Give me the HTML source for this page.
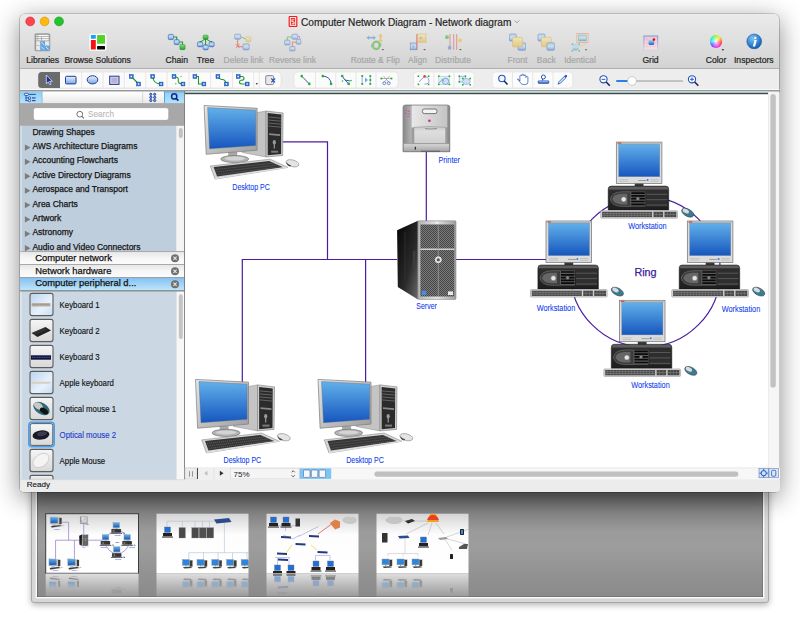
<!DOCTYPE html>
<html><head><meta charset="utf-8">
<style>
*{margin:0;padding:0;box-sizing:border-box}
html,body{width:800px;height:618px;overflow:hidden;background:#fff;font-family:"Liberation Sans",sans-serif}
.abs{position:absolute}
#win{position:absolute;left:20px;top:13.5px;width:759.4px;height:478px;border-radius:5px 5px 4px 4px;background:#ececec;box-shadow:0 6px 26px rgba(0,0,0,.48),0 0 0 .6px rgba(0,0,0,.3)}
#tb{position:absolute;left:0;top:0;width:100%;height:55.3px;border-radius:5px 5px 0 0;background:linear-gradient(#ebebeb,#d3d3d3);border-bottom:1px solid #b0b0b0}
#tb2{position:absolute;left:0;top:55.3px;width:100%;height:22.5px;background:#ededed}
#status{position:absolute;left:0;top:466.7px;width:760px;height:11.8px;background:#ececec;border-radius:0 0 4px 4px}
#panel{position:absolute;left:31px;top:488px;width:738px;height:115px;background:#d6d6d6;border:1px solid #a8a8a8;border-radius:0 0 3px 3px;box-shadow:0 2px 6px rgba(0,0,0,.3)}
#panelin{position:absolute;left:5px;top:3px;width:726px;height:105px;box-shadow:inset 1px 0 0 rgba(0,0,0,.22),inset -1px 0 0 rgba(0,0,0,.15),inset 0 -1px 0 rgba(0,0,0,.15),0 0 0 1.4px #fbfbfb;background:linear-gradient(#666 0%,#838383 16%,#9b9b9b 38%,#9d9d9d 52%,#929292 78%,#8a8a8a 100%)}
</style></head><body>
<div id="panel"><div id="panelin"></div></div>
<div id="win">
  <div id="tb"></div>
  <div id="tb2"></div>
  <div id="status"></div>
</div>
<svg class="abs" style="left:0;top:0" width="800" height="95" viewBox="0 0 800 95" font-family="Liberation Sans">
<defs>
<linearGradient id="gblue" x1="0" y1="0" x2="0" y2="1"><stop offset="0" stop-color="#9cc8f2"/><stop offset=".5" stop-color="#b8e0fa"/><stop offset="1" stop-color="#4f86d4"/></linearGradient>
<linearGradient id="ggreen" x1="0" y1="0" x2="0" y2="1"><stop offset="0" stop-color="#8fe08a"/><stop offset="1" stop-color="#1fa02a"/></linearGradient>
<linearGradient id="gyel" x1="0" y1="0" x2="0" y2="1"><stop offset="0" stop-color="#fbe7a0"/><stop offset="1" stop-color="#e8b94a"/></linearGradient>
<linearGradient id="gbtn" x1="0" y1="0" x2="0" y2="1"><stop offset="0" stop-color="#dbe9f8"/><stop offset="1" stop-color="#8fb4e6"/></linearGradient>
<radialGradient id="gi" cx=".4" cy=".3" r=".7"><stop offset="0" stop-color="#7cc4f5"/><stop offset="1" stop-color="#0d5fb8"/></radialGradient>
</defs>
<!-- traffic lights -->
<circle cx="30.2" cy="21.4" r="4.4" fill="#fc4650" stroke="#d92a36" stroke-width=".7"/>
<circle cx="44.6" cy="21.4" r="4.4" fill="#fdb812" stroke="#dc9a08" stroke-width=".7"/>
<circle cx="59" cy="21.4" r="4.4" fill="#22c52c" stroke="#139c1d" stroke-width=".7"/>
<!-- title -->
<rect x="288.6" y="15.9" width="8.8" height="11.1" rx="1" fill="#ee1c1c"/>
<rect x="290.3" y="17.6" width="5.4" height="7.7" fill="none" stroke="#fff" stroke-width="1"/>
<path d="M294.3 19.8h-2.4v2h2.2v2h-2.4" fill="none" stroke="#fff" stroke-width=".9"/>
<text x="301" y="25.7" font-size="10.1" fill="#262626" stroke="#262626" stroke-width=".2">Computer Network Diagram - Network diagram</text>
<path d="M514.5 20.5l2.5 2.3 2.5-2.3" fill="none" stroke="#9a9a9a" stroke-width=".9"/>
<!-- Libraries icon -->
<rect x="35" y="33.8" width="14.8" height="17" rx=".8" fill="#a4a4a4" stroke="#808080" stroke-width=".6"/>
<g fill="#fafafa"><rect x="36.3" y="34.9" width="12.4" height="1.3"/><rect x="36.3" y="37" width="12.4" height="1.3"/><rect x="36.3" y="39.1" width="12.4" height="1.3"/></g>
<g fill="#9a9a9a"><rect x="37.6" y="34.9" width=".6" height="5.5"/><rect x="41" y="37" width=".8" height="3.4"/></g>
<g fill="#e2e2e2"><rect x="36.1" y="41.2" width="4.2" height="4.4"/><rect x="36.1" y="45.9" width="4.2" height="4.3"/><rect x="45" y="41.2" width="4.3" height="4.4"/></g>
<g fill="#5aa8ee"><rect x="40.5" y="41.2" width="4.3" height="4.4"/><rect x="40.5" y="45.9" width="4.3" height="4.3"/><rect x="45" y="45.9" width="4.3" height="4.3"/></g>
<path d="M37 42l2.6 2.8M37 46.7l2.6 2.8M45.9 42l2.6 2.8M41.4 42l2.6 2.8M41.4 46.7l2.6 2.8M45.9 46.7l2.6 2.8" stroke="#fff" stroke-width=".9" opacity=".85"/>
<!-- Browse Solutions -->
<rect x="89.3" y="33.7" width="17.3" height="17.1" rx="2.5" fill="#fff"/>
<rect x="90.9" y="35" width="4.9" height="3.7" rx=".5" fill="#1aa0f5"/>
<rect x="90.9" y="40.1" width="4.9" height="9.3" rx=".5" fill="#fa1010"/>
<rect x="97.1" y="35" width="7.9" height="8.8" rx=".5" fill="#52d22a"/>
<rect x="97.1" y="45.9" width="7.9" height="3.5" rx=".5" fill="#050505"/>
<!-- Chain -->
<path d="M173.5 37h3.2v4.5M179 42h3.5v4.5" fill="none" stroke="#1f9a26" stroke-width="1.1"/>
<rect x="168.3" y="34.4" width="5.2" height="5.2" rx="1.2" fill="url(#gblue)" stroke="#3a5aa8" stroke-width=".6"/>
<rect x="174.2" y="39.6" width="5" height="5" rx="1.2" fill="url(#gblue)" stroke="#3a5aa8" stroke-width=".6"/>
<rect x="179.9" y="44.5" width="5.2" height="5.2" rx="1.2" fill="url(#ggreen)" stroke="#218b27" stroke-width=".5"/>
<!-- Tree -->
<path d="M205.6 38.6L200.1 42.3M205.6 38.6L211.6 42.3M205.6 38.6V45.3" fill="none" stroke="#1f9a26" stroke-width="1"/><g fill="#1f9a26"><circle cx="200.4" cy="41.9" r=".9"/><circle cx="211.3" cy="41.9" r=".9"/><circle cx="205.6" cy="44.8" r=".9"/></g>
<rect x="203.1" y="35.1" width="5" height="4.2" rx="1.2" fill="url(#ggreen)" stroke="#218b27" stroke-width=".5"/>
<rect x="197.5" y="41.9" width="5.2" height="4.9" rx="1.2" fill="url(#gblue)" stroke="#3a5aa8" stroke-width=".6"/>
<rect x="203.1" y="44.9" width="5.1" height="4.9" rx="1.2" fill="url(#gblue)" stroke="#3a5aa8" stroke-width=".6"/>
<rect x="209.1" y="41.9" width="5" height="4.9" rx="1.2" fill="url(#gblue)" stroke="#3a5aa8" stroke-width=".6"/>
<!-- Delete link (disabled) -->
<g opacity=".55">
<path d="M240.7 36.7l5 2.4" stroke="#2aa02a" stroke-width=".9"/>
<path d="M237.7 39.2v7.5h5.3" fill="none" stroke="#e5341e" stroke-width="1"/>
<path d="M235.8 44.3l3.8 3.6M239.6 44.3l-3.8 3.6" stroke="#e5341e" stroke-width="1"/>
<rect x="234.6" y="34.2" width="6.1" height="5" rx="1" fill="url(#gblue)" stroke="#3a5aa8" stroke-width=".6"/>
<rect x="245.8" y="36.8" width="5.1" height="4.9" rx="1" fill="url(#gyel)" stroke="#c69a2a" stroke-width=".5"/>
<rect x="243" y="43.8" width="6.2" height="6.1" rx="1" fill="url(#gblue)" stroke="#3a5aa8" stroke-width=".6"/>
</g>
<!-- Reverse link (disabled) -->
<g opacity=".55">
<path d="M287.3 40v-3h4.7" stroke="#2aa02a" stroke-width=".9" fill="none"/>
<path d="M297.7 36.5h2v2.8" stroke="#d03ac8" stroke-width=".9" fill="none"/>
<path d="M296.4 42.2h-4v4.3" stroke="#e5341e" stroke-width=".9" fill="none"/>
<rect x="284.6" y="40.1" width="5.4" height="4.9" rx="1" fill="url(#gblue)" stroke="#3a5aa8" stroke-width=".6"/>
<rect x="292" y="34.2" width="5.7" height="5" rx="1" fill="url(#gblue)" stroke="#3a5aa8" stroke-width=".6"/>
<rect x="296.4" y="39.3" width="4.4" height="5" rx="1" fill="url(#gblue)" stroke="#3a5aa8" stroke-width=".6"/>
<rect x="289.7" y="46.5" width="5.3" height="4.5" rx="1" fill="url(#gblue)" stroke="#3a5aa8" stroke-width=".6"/>
</g>
<!-- Rotate & Flip (disabled) -->
<g opacity=".6">
<path d="M366.5 37.7l2.6-2.2v4.4zM376 37.7l-2.6-2.2v4.4z" fill="#5b8fd8"/><path d="M368.5 37.7h5.5" stroke="#5b8fd8" stroke-width="1.6"/>
<path d="M380.6 33.8l-2.2 2.6h4.4zM380.6 42.5l-2.2-2.6h4.4z" fill="#e8b42a"/><path d="M380.6 35.5v5.3" stroke="#e8b42a" stroke-width="1.6"/>
<path d="M372.3 44.5q.5-3.6 4-3.8 3.4.2 3.9 3.4l1-.6-.4 3-2.6-1.2 1-.5q-.6-2.2-2.9-2.3-2.4.1-2.8 2.3z M380.2 46.2q-.5 3.6-4 3.8-3.4-.2-3.9-3.4l-1 .6.4-3 2.6 1.2-1 .5q.6 2.2 2.9 2.3 2.4-.1 2.8-2.3z" fill="#4cbc3c" stroke="#3a9a30" stroke-width=".4"/>
<path d="M381.6 49h2.6l-1.3 1.6z" fill="#111"/>
</g>
<!-- Align (disabled) -->
<g opacity=".6">
<rect x="417.7" y="34" width="8.3" height="8.2" fill="url(#gyel)" stroke="#c69a2a" stroke-width=".5"/>
<rect x="410.2" y="43" width="6.8" height="6.8" fill="url(#gblue)" stroke="#3a5aa8" stroke-width=".6"/>
<path d="M416.8 34v15.8" stroke="#e0443a" stroke-width="1"/>
<path d="M419 38l2.5-1.3v2.6z M415 46.5l-2.5-1.3v2.6z" fill="#5b8fd8"/>
<path d="M423.2 49h2.6l-1.3 1.6z" fill="#111"/>
</g>
<!-- Distribute (disabled) -->
<g opacity=".6">
<path d="M450 34v15.8M453.7 34v15.8M456.7 34v15.8" stroke="#e0443a" stroke-width=".8"/>
<circle cx="447" cy="37.2" r="1.9" fill="#3cb83c"/>
<circle cx="460.1" cy="40.5" r="1.9" fill="#f0c030"/>
<circle cx="449.6" cy="47.7" r="1.9" fill="#5b8fd8"/>
<path d="M459.1 49h2.6l-1.3 1.6z" fill="#111"/>
</g>
<!-- Front (disabled) -->
<g opacity=".6">
<rect x="509.4" y="34" width="6.9" height="7.1" rx="1.2" fill="url(#gblue)" stroke="#3a5aa8" stroke-width=".6"/>
<rect x="518" y="42.8" width="7.6" height="7.5" rx="1.2" fill="url(#gblue)" stroke="#3a5aa8" stroke-width=".6"/>
<rect x="512.5" y="37.4" width="10" height="9.4" rx="1" fill="url(#gyel)" stroke="#c69a2a" stroke-width=".5"/>
</g>
<!-- Back (disabled) -->
<g opacity=".6">
<rect x="538" y="34" width="7" height="7.1" rx="1.2" fill="url(#gblue)" stroke="#3a5aa8" stroke-width=".6"/>
<rect x="541.3" y="37.4" width="10" height="9.4" rx="1" fill="url(#gyel)" stroke="#c69a2a" stroke-width=".5"/>
<rect x="547" y="42.8" width="7.4" height="7.5" rx="1.2" fill="url(#gblue)" stroke="#3a5aa8" stroke-width=".6"/>
</g>
<!-- Identical (disabled) -->
<g opacity=".6">
<path d="M577 42.4l-2 3M588 42.4l-9 4.5" stroke="#f3c9a0" stroke-width="1.5"/>
<rect x="576.9" y="33.6" width="11.2" height="8.8" fill="#fbe3e3" stroke="#e07b7b" stroke-width=".7"/>
<rect x="578.6" y="35" width="7.8" height="6" fill="url(#gblue)" stroke="#3cb83c" stroke-width=".6"/>
<circle cx="575.6" cy="47.3" r="3.3" fill="url(#gblue)"/>
<g fill="#2ec02e"><rect x="571.6" y="43.4" width="1.6" height="1.6"/><rect x="578.4" y="43.4" width="1.6" height="1.6"/><rect x="571.6" y="50" width="1.6" height="1.6"/><rect x="578.4" y="50" width="1.6" height="1.6"/></g>
<path d="M584.8 49.2h2.6l-1.3 1.6z" fill="#111"/>
</g>
<!-- Grid -->
<defs><linearGradient id="gridfade" x1="0" y1="0" x2="0" y2="1"><stop offset="0" stop-color="#f6c4d0"/><stop offset="1" stop-color="#f3e4ea"/></linearGradient>
<linearGradient id="gridb" x1="0" y1="0" x2="0" y2="1"><stop offset="0" stop-color="#6f90e0"/><stop offset="1" stop-color="#6f90e0" stop-opacity=".15"/></linearGradient>
<linearGradient id="gridsq" x1="0" y1="0" x2="0" y2="1"><stop offset="0" stop-color="#c8f0ff"/><stop offset="1" stop-color="#1a64c8"/></linearGradient></defs>
<rect x="643.9" y="36" width="13.8" height="14" fill="url(#gridfade)" stroke="url(#gridb)" stroke-width=".9"/>
<path d="M647 36.5v13.2M650.5 36.5v13.2M654 36.5v13.2M644.3 39.5h13M644.3 43h13M644.3 46.5h13" stroke="#f0a8b8" stroke-width=".35" opacity=".7"/>
<rect x="648.6" y="38.8" width="5.6" height="6.2" rx="1.2" fill="url(#gridsq)"/>
<circle cx="653.9" cy="39.6" r="1.3" fill="#e00c0c"/>
<!-- Color wheel: html overlay -->
<path d="M721.6 49.2h2.6l-1.3 1.6z" fill="#111"/>
<!-- Inspectors -->
<circle cx="754.2" cy="41.4" r="7.4" fill="url(#gi)" stroke="#0b4f9c" stroke-width=".5"/>
<circle cx="755.3" cy="37.9" r="1.15" fill="#fff"/><path d="M754.6 40h2.2l-1.7 6.6h-2.3z" fill="#fff"/><path d="M753.6 40.3h2.4" stroke="#fff" stroke-width=".6"/>
<!-- labels -->
<g font-size="8.6" fill="#262626" stroke="#262626" stroke-width=".22" text-anchor="middle">
<text x="42.7" y="63">Libraries</text>
<text x="97.6" y="63">Browse Solutions</text>
<text x="176.8" y="63">Chain</text>
<text x="205.5" y="63">Tree</text>
<text x="650.5" y="63">Grid</text>
<text x="716" y="63">Color</text>
<text x="753.8" y="63">Inspectors</text>
</g>
<g font-size="8.5" fill="#a6a6a6" stroke="#a6a6a6" stroke-width=".18" text-anchor="middle">
<text x="243.4" y="63">Delete link</text>
<text x="292.5" y="63">Reverse link</text>
<text x="375.3" y="63">Rotate &amp; Flip</text>
<text x="417.5" y="63">Align</text>
<text x="453" y="63">Distribute</text>
<text x="517.5" y="63">Front</text>
<text x="546.3" y="63">Back</text>
<text x="580" y="63">Identical</text>
</g>
</svg>
<div class="abs" style="left:709.8px;top:35.3px;width:12.6px;height:12.6px;border-radius:50%;background:radial-gradient(circle,rgba(255,255,255,.95) 0,rgba(255,255,255,.5) 30%,rgba(255,255,255,0) 70%),conic-gradient(#9cf53a,#f8e030 40deg,#ff6a20 80deg,#ff2050 110deg,#ff30c0 150deg,#c040ff 190deg,#5050ff 230deg,#20d0ff 270deg,#20f0a0 310deg,#9cf53a)"></div>
<svg class="abs" style="left:0;top:0" width="800" height="95" viewBox="0 0 800 95">
<defs>
<linearGradient id="gsq" x1="0" y1="0" x2="0" y2="1"><stop offset="0" stop-color="#e6f0fb"/><stop offset="1" stop-color="#7ea7e0"/></linearGradient>
</defs>
<g fill="#fbfbfb" stroke="#dedede" stroke-width=".6">
<rect x="38.2" y="72" width="242.8" height="16" rx="3.5"/>
<rect x="294" y="72" width="104" height="16" rx="3.5"/>
<rect x="413.5" y="72" width="60.8" height="16" rx="3.5"/>
<rect x="492.3" y="72" width="80.5" height="16" rx="3.5"/>
</g>
<path d="M38.2 75.5a3.5 3.5 0 0 1 3.5-3.5H60v16H41.7a3.5 3.5 0 0 1-3.5-3.5z" fill="#6b6b6b"/>
<g stroke="#e2e2e2" stroke-width=".8">
<path d="M81.7 72v16M103 72v16M124.3 72v16M145.8 72v16M167 72v16M189 72v16M210.6 72v16M232.5 72v16M253.7 72v16M259.3 72v16"/>
<path d="M315.5 72v16M335.8 72v16M356 72v16M376 72v16"/>
<path d="M433.8 72v16M454 72v16"/>
<path d="M512.5 72v16M532.8 72v16M553 72v16"/>
</g>
<!-- pointer -->
<path d="M46.3 75l0 8.8 2-1.9 1.5 2.9 1.3-.7-1.5-2.8h2.8z" fill="#1a2fa0" stroke="#f0f4ff" stroke-width=".7"/>
<!-- rect -->
<rect x="65.5" y="76.3" width="10.5" height="7.6" rx="1" fill="url(#gsq)" stroke="#1c3c9c" stroke-width="1"/>
<!-- ellipse -->
<ellipse cx="92.5" cy="79.8" rx="5.3" ry="4.1" fill="url(#gsq)" stroke="#1c3c9c" stroke-width="1"/>
<!-- square -->
<rect x="109.7" y="76.2" width="9.3" height="8.2" fill="#d8d0e8" stroke="#1c3c9c" stroke-width="1"/>
<rect x="111.5" y="77.8" width="5.7" height="5" fill="#b9aed3"/>
<!-- connectors -->
<g fill="none" stroke="#1e9a26" stroke-width="1.1">
<path d="M131.3 76.5L138.6 84"/>
<path d="M152.7 76.5Q153.5 84 161 84"/>
<path d="M174 76.5Q179 77 178.3 80.2Q177.5 84 183 84"/>
<path d="M194.9 76.5H198.5V84H203.9"/>
<path d="M217.9 76.5Q220 80 222 79.5Q225 79 226.4 84"/>
<path d="M238.2 76.5H242Q244 76.5 244 78.5Q244 80.3 241 80.3Q239.5 80.3 239.5 82.3Q239.5 84 242 84H247"/>
</g>
<g fill="#2a7bd8" stroke="#1a3fa0" stroke-width=".5">
<rect x="129.4" y="74.6" width="3.8" height="3.8"/><rect x="136.7" y="82.1" width="3.8" height="3.8"/>
<rect x="150.8" y="74.6" width="3.8" height="3.8"/><rect x="159.2" y="82.1" width="3.8" height="3.8"/>
<rect x="172.1" y="74.6" width="3.8" height="3.8"/><rect x="181.1" y="82.1" width="3.8" height="3.8"/>
<rect x="193" y="74.6" width="3.8" height="3.8"/><rect x="202" y="82.1" width="3.8" height="3.8"/>
<rect x="216" y="74.6" width="3.8" height="3.8"/><rect x="224.5" y="82.1" width="3.8" height="3.8"/>
<rect x="236.3" y="74.6" width="3.8" height="3.8"/><rect x="245.3" y="82.1" width="3.8" height="3.8"/>
</g>
<g fill="#fff"><rect x="130.6" y="75.8" width="1.4" height="1.4"/><rect x="137.9" y="83.3" width="1.4" height="1.4"/><rect x="152" y="75.8" width="1.4" height="1.4"/><rect x="160.4" y="83.3" width="1.4" height="1.4"/><rect x="173.3" y="75.8" width="1.4" height="1.4"/><rect x="182.3" y="83.3" width="1.4" height="1.4"/><rect x="194.2" y="75.8" width="1.4" height="1.4"/><rect x="203.2" y="83.3" width="1.4" height="1.4"/><rect x="217.2" y="75.8" width="1.4" height="1.4"/><rect x="225.7" y="83.3" width="1.4" height="1.4"/><rect x="237.5" y="75.8" width="1.4" height="1.4"/><rect x="246.5" y="83.3" width="1.4" height="1.4"/></g>
<circle cx="181" cy="76.6" r=".7" fill="#2ec02e"/><circle cx="175.8" cy="83.8" r=".7" fill="#2ec02e"/>
<path d="M255.6 83.2h2.4l-1.2 1.6z" fill="#111"/>
<!-- box x -->
<rect x="265.7" y="75.6" width="7.9" height="9" rx="1.2" fill="#e8e8e8" stroke="#707070" stroke-width=".8"/>
<path d="M271.3 78.5l3.8 3.8M275.1 78.5l-3.8 3.8" stroke="#1a55c8" stroke-width="1.1"/>
<!-- group 2 -->
<path d="M301.7 76.1L309.3 83.9" stroke="#3457b0" stroke-width="1"/>
<path d="M322.8 76.1Q330.5 76.5 331.1 83.9" fill="none" stroke="#3457b0" stroke-width="1"/>
<path d="M342.2 76L345 80L348.7 83.9M345 80L350 81" fill="none" stroke="#3457b0" stroke-width="1"/>
<g fill="#22b030"><circle cx="301.7" cy="76.1" r="1.3"/><circle cx="309.3" cy="83.9" r="1.3"/><circle cx="322.8" cy="76.1" r="1.3"/><circle cx="331.1" cy="83.9" r="1.3"/><circle cx="342.2" cy="76" r="1.3"/><circle cx="348.7" cy="83.9" r="1.3"/><circle cx="351" cy="80.6" r=".8"/><circle cx="342.5" cy="81" r=".8"/></g>
<path d="M362.2 76v8M370.3 76v8" stroke="#5b8fd8" stroke-width=".7"/>
<g fill="#22b030"><circle cx="362.2" cy="76" r="1.1"/><circle cx="362.2" cy="84" r="1.1"/><circle cx="370.3" cy="76" r="1.1"/><circle cx="370.3" cy="80" r="1.1"/><circle cx="370.3" cy="84" r="1.1"/></g>
<path d="M365 77.6v4.8l3-2.4z" fill="#7aa7e0"/>
<path d="M381 78.5h11M383.5 76l6 7M389.5 76l-6 7" stroke="#8a8a8a" stroke-width=".6"/>
<g fill="#22b030"><circle cx="381.4" cy="78.5" r="1.1"/><circle cx="391.4" cy="78.5" r="1.1"/></g>
<circle cx="384.3" cy="83.2" r="1.5" fill="none" stroke="#4a78c8" stroke-width=".8"/><circle cx="388.7" cy="83.2" r="1.5" fill="none" stroke="#4a78c8" stroke-width=".8"/>
<!-- group 3 -->
<path d="M419 81.8L424.6 76.4" stroke="#5b8fd8" stroke-width=".8"/>
<path d="M424.6 76.4Q430 77.5 428.8 82.5Q427.5 84.5 424.5 84" fill="none" stroke="#7a9ad8" stroke-width=".9"/>
<circle cx="424.6" cy="76.4" r="1.3" fill="#e04040"/>
<g fill="#22b030"><rect x="417.6" y="75.4" width="1.6" height="1.6"/><rect x="427.8" y="75.4" width="1.6" height="1.6"/><rect x="417.6" y="83.6" width="1.6" height="1.6"/><rect x="427.8" y="83.6" width="1.6" height="1.6"/></g>
<rect x="438.8" y="76.2" width="10.7" height="8.2" fill="#e3eef8" stroke="#9ad09a" stroke-width=".5"/>
<circle cx="445.5" cy="81.3" r="3.2" fill="#cfe0f5" stroke="#5b8fd8" stroke-width=".7"/>
<path d="M439 83l3.5-4 1.5 2.5" fill="none" stroke="#5b8fd8" stroke-width=".7"/>
<g fill="#22b030"><rect x="438" y="75.4" width="1.6" height="1.6"/><rect x="448.6" y="75.4" width="1.6" height="1.6"/><rect x="438" y="83.6" width="1.6" height="1.6"/><rect x="448.6" y="83.6" width="1.6" height="1.6"/></g>
<rect x="459.2" y="76.2" width="6.4" height="5.8" fill="#e3eef8" stroke="#7a9ad8" stroke-width=".6"/>
<ellipse cx="466.4" cy="81.4" rx="3.8" ry="3" fill="#cfe0f5" stroke="#7a9ad8" stroke-width=".6"/>
<g fill="#22b030"><rect x="458.5" y="75.4" width="1.6" height="1.6"/><rect x="464.6" y="75.4" width="1.6" height="1.6"/><rect x="462" y="77.7" width="1.6" height="1.6"/><rect x="469.4" y="77.7" width="1.6" height="1.6"/><rect x="458.5" y="81" width="1.6" height="1.6"/><rect x="462" y="84" width="1.6" height="1.6"/><rect x="469.4" y="84" width="1.6" height="1.6"/></g>
<!-- group 4 -->
<circle cx="501.9" cy="78.5" r="3.2" fill="#eef5fc" stroke="#2454b8" stroke-width="1.1"/>
<path d="M504.2 80.9l3.3 3.6" stroke="#1a2a50" stroke-width="1.5"/>
<path d="M519 80.5l1.8 2.8q1 1.2 2.8 1.2h2q2.3 0 2.3-2.5v-4.5q0-1-1-1t-1 1v-1.5q0-1-1-1t-1 1v-.8q0-1-1-1t-1 1v.8q0-1-1-1t-1 1v5l-1-1.5q-.8-.8-1.5-.2z" fill="#fff" stroke="#2454b8" stroke-width=".7"/>
<circle cx="543.4" cy="77" r="2" fill="#fff" stroke="#2454b8" stroke-width="1"/>
<path d="M542.5 79v1.5M538.3 81h10.4v1.8h-10.4zM538.3 83.2h10.4" fill="none" stroke="#2454b8" stroke-width="1"/>
<path d="M558 84.2l1-2.5 5.4-5.4 1.5 1.5-5.4 5.4z" fill="#cfe0f5" stroke="#2454b8" stroke-width=".8"/>
<path d="M564.4 76.3l1.6-1.3 1 1-1.3 1.6" fill="#2454b8" stroke="#2454b8" stroke-width=".8"/>
<!-- zoom slider -->
<circle cx="603.5" cy="79.3" r="3.6" fill="#fff" stroke="#2454b8" stroke-width="1.1"/>
<path d="M601.6 79.3h3.8" stroke="#2454b8" stroke-width="1"/>
<path d="M606.2 82l3.6 3.7" stroke="#1a2a50" stroke-width="1.6"/>
<path d="M617 81h65.4" stroke="#b5b5b5" stroke-width="1.6" stroke-linecap="round"/>
<path d="M617 81h12" stroke="#2f7ef0" stroke-width="1.8" stroke-linecap="round"/>
<circle cx="632" cy="81" r="4.4" fill="#fff" stroke="#b8b8b8" stroke-width=".7"/>
<circle cx="692" cy="79.3" r="3.6" fill="#fff" stroke="#2454b8" stroke-width="1.1"/>
<path d="M690.1 79.3h3.8M692 77.4v3.8" stroke="#2454b8" stroke-width="1"/>
<path d="M694.7 82l3.6 3.7" stroke="#1a2a50" stroke-width="1.6"/>
</svg>
<svg class="abs" style="left:0;top:0" width="800" height="495" viewBox="0 0 800 495" font-family="Liberation Sans">
<defs>
<linearGradient id="ghdrblue" x1="0" y1="0" x2="0" y2="1"><stop offset="0" stop-color="#8fcdf6"/><stop offset="1" stop-color="#b4e3fb"/></linearGradient>
<linearGradient id="ghdrw" x1="0" y1="0" x2="0" y2="1"><stop offset="0" stop-color="#ffffff"/><stop offset="1" stop-color="#e9e9e9"/></linearGradient>
<linearGradient id="gtab" x1="0" y1="0" x2="0" y2="1"><stop offset="0" stop-color="#e6e6e6"/><stop offset=".5" stop-color="#f6f6f6"/><stop offset="1" stop-color="#fbfbfb"/></linearGradient>
<linearGradient id="gtabsel" x1="0" y1="0" x2="0" y2="1"><stop offset="0" stop-color="#86c0ef"/><stop offset="1" stop-color="#bde6fb"/></linearGradient>
</defs>
<!-- header row -->

<rect x="20" y="91.5" width="164.5" height="11.6" fill="url(#ghdrw)"/>
<rect x="20" y="91.5" width="22" height="11.6" fill="url(#ghdrblue)"/>
<rect x="164" y="91.5" width="20.5" height="11.6" fill="url(#ghdrblue)"/>
<rect x="164" y="91.5" width=".8" height="11.6" fill="#4a90e0"/><rect x="164" y="91.5" width="20.5" height=".8" fill="#5a9ae0"/>
<rect x="142.3" y="91.5" width=".8" height="11.6" fill="#d0d0d0"/>
<rect x="41.8" y="91.5" width=".6" height="11.6" fill="#6aa8d8"/>
<!-- tree icon -->
<g stroke="#1c3f9c" stroke-width=".8" fill="#d8ecff">
<rect x="24.3" y="93.3" width="4.2" height="2.2" rx="1.1"/>
<circle cx="29.5" cy="97.9" r="1.2"/><circle cx="29.5" cy="100.6" r="1.2"/>
</g>
<g fill="#1c3f9c">
<rect x="29" y="93.9" width="6.8" height=".9"/>
<rect x="25.6" y="95.5" width=".8" height="5.5"/>
<rect x="25.6" y="97.5" width="2.7" height=".8"/><rect x="25.6" y="100.3" width="2.7" height=".8"/>
<rect x="32" y="97.4" width="3.6" height="1.1"/><rect x="32" y="100.1" width="3.6" height="1.1"/>
</g>
<!-- grid icon -->
<g fill="#7a9ad8" stroke="#1c3f9c" stroke-width=".9">
<circle cx="150.8" cy="94.3" r="1.1"/><circle cx="154.7" cy="94.3" r="1.1"/>
<circle cx="150.8" cy="97.4" r="1.1"/><circle cx="154.7" cy="97.4" r="1.1"/>
<circle cx="150.8" cy="100.5" r="1.1"/><circle cx="154.7" cy="100.5" r="1.1"/>
</g>
<!-- search icon -->
<circle cx="174.2" cy="96.4" r="2.6" fill="none" stroke="#0f2a8a" stroke-width="1.5"/>
<path d="M176.1 98.3l2.3 2.3" stroke="#0f2a8a" stroke-width="1.8"/>
<!-- search area -->
<rect x="20" y="103.1" width="164.5" height="22.8" fill="#a8a8a8"/>
<rect x="33.4" y="107.7" width="135.3" height="12.6" rx="2.5" fill="#fff" stroke="#8c8c8c" stroke-width=".5"/>
<circle cx="79.8" cy="114.2" r="2.9" fill="none" stroke="#666" stroke-width=".9"/>
<path d="M81.9 116.3l2 2" stroke="#666" stroke-width="1.1"/>
<text x="88" y="117.2" font-size="8.2" fill="#b8b8b8" stroke="#b8b8b8" stroke-width=".1">Search</text>
<!-- upper list -->
<rect x="20" y="125.9" width="156.5" height="125.5" fill="#bfcedc"/>
<rect x="176.5" y="125.9" width="8" height="125.5" fill="#f4f4f4"/>
<rect x="178.8" y="128" width="4" height="10" rx="2" fill="#c2c2c2"/>
<g font-size="8.5" fill="#141414" stroke="#141414" stroke-width=".25">
<text x="32.4" y="134.8">Drawing Shapes</text>
<text x="32.4" y="149.1">AWS Architecture Diagrams</text>
<text x="32.4" y="163.4">Accounting Flowcharts</text>
<text x="32.4" y="177.8">Active Directory Diagrams</text>
<text x="32.4" y="192.2">Aerospace and Transport</text>
<text x="32.4" y="206.6">Area Charts</text>
<text x="32.4" y="221">Artwork</text>
<text x="32.4" y="235.4">Astronomy</text>
<text x="32.4" y="249.8">Audio and Video Connectors</text>
</g>
<g fill="#7c7c7c">
<path d="M24.9 144.4v6.3l5.6-3.15z"/><path d="M24.9 158.7v6.3l5.6-3.15z"/><path d="M24.9 173.1v6.3l5.6-3.15z"/><path d="M24.9 187.5v6.3l5.6-3.15z"/><path d="M24.9 201.9v6.3l5.6-3.15z"/><path d="M24.9 216.3v6.3l5.6-3.15z"/><path d="M24.9 230.7v6.3l5.6-3.15z"/><path d="M24.9 245.1v6.3l5.6-3.15z"/>
</g>
<!-- tabs -->
<rect x="20" y="251" width="164.5" height="40.5" fill="#9a9a9a"/>
<rect x="20" y="251.8" width="164.5" height="12.2" fill="url(#gtab)"/>
<rect x="20" y="264.8" width="164.5" height="12.2" fill="url(#gtab)"/>
<rect x="20" y="277.8" width="164.5" height="12.6" fill="url(#gtabsel)"/>
<rect x="20" y="290.4" width="164.5" height="1.2" fill="#7c7c7c"/>
<g font-size="9.4" fill="#111" stroke="#111" stroke-width=".25">
<text x="35.3" y="260.6">Computer network</text>
<text x="35.3" y="273.6">Network hardware</text>
<text x="35.3" y="286.2">Computer peripheral d...</text>
</g>
<g><circle cx="175" cy="258.2" r="4" fill="#6f6f6f"/><circle cx="175" cy="271.2" r="4" fill="#6f6f6f"/><circle cx="175" cy="284.2" r="4" fill="#6f6f6f"/></g>
<g stroke="#e8e8e8" stroke-width="1.1"><path d="M173.4 256.6l3.2 3.2M176.6 256.6l-3.2 3.2M173.4 269.6l3.2 3.2M176.6 269.6l-3.2 3.2M173.4 282.6l3.2 3.2M176.6 282.6l-3.2 3.2"/></g>
<!-- lower list -->
<rect x="20" y="291.6" width="156.7" height="188.2" fill="#cbd8e4"/>
<rect x="176.7" y="291.6" width="7.8" height="188.2" fill="#f7f7f7"/>
<rect x="178.8" y="294.2" width="4" height="44.7" rx="2" fill="#c4c4c4"/>
<rect x="184.2" y="90.5" width="1" height="389" fill="#6e6e6e"/>
<rect x="20.4" y="125.9" width="1.2" height="125.5" fill="#d6e4f0"/>
<rect x="20.4" y="291.6" width="1.2" height="188" fill="#e0ecf6"/>

<defs>
<linearGradient id="icw" x1="0" y1="0" x2="0" y2="1"><stop offset="0" stop-color="#f6f6f6"/><stop offset="1" stop-color="#d8d8d8"/></linearGradient>
<linearGradient id="icb" x1="0" y1="0" x2="1" y2="1"><stop offset="0" stop-color="#b9d3ee"/><stop offset=".6" stop-color="#e8f1fa"/><stop offset="1" stop-color="#c6dcf2"/></linearGradient>
</defs>
<g stroke="#5c5c5c" stroke-width="1.1">
<rect x="30" y="293.4" width="23" height="22.2" rx="2" fill="url(#icb)"/>
<rect x="30" y="319.4" width="23" height="22.2" rx="2" fill="url(#icw)"/>
<rect x="30" y="345.4" width="23" height="22.2" rx="2" fill="url(#icw)"/>
<rect x="30" y="371.4" width="23" height="22.2" rx="2" fill="url(#icb)"/>
<rect x="30" y="397.4" width="23" height="22.2" rx="2" fill="url(#icw)"/>
<rect x="30" y="449.4" width="23" height="22.2" rx="2" fill="url(#icw)"/>
<path d="M30 480V477.4q0-2 2-2h19q2 0 2 2V480" fill="url(#icw)"/>
</g>
<rect x="28.8" y="422.2" width="25.4" height="24.6" rx="3" fill="none" stroke="#4aa0f0" stroke-width="1.6"/>
<rect x="30.2" y="423.6" width="22.6" height="21.8" rx="2" fill="url(#icw)" stroke="#5c5c5c" stroke-width="1"/>
<!-- kb1 -->
<rect x="31.5" y="303" width="19" height="3.4" rx="1" fill="#b8b0a6"/><path d="M32.5 304.7h17" stroke="#8a847c" stroke-width=".8" stroke-dasharray="1 .5"/>
<!-- kb2 -->
<path d="M31.5 333l14-6 5.5 3.5-13.5 6.5z" fill="#222"/><path d="M33 333l12-5M34 334.5l12-5" stroke="#555" stroke-width=".5"/>
<!-- kb3 -->
<rect x="31" y="355.3" width="20" height="4.4" fill="#10143a"/><path d="M32 357.3h18" stroke="#5a6aa8" stroke-width=".8" stroke-dasharray="1.2 .5"/>
<!-- apple kb -->
<rect x="31.5" y="381.8" width="19" height="2" rx=".8" fill="#d8cfc4"/>
<!-- mouse1 -->
<ellipse cx="41.5" cy="408.5" rx="9" ry="5.6" transform="rotate(32 41.5 408.5)" fill="#2f6a7a"/>
<ellipse cx="38.5" cy="406" rx="5" ry="3.2" transform="rotate(32 38.5 406)" fill="#c8c8c8"/>
<ellipse cx="44" cy="411" rx="4.5" ry="2.6" transform="rotate(32 44 411)" fill="#111"/>
<!-- mouse2 -->
<ellipse cx="41" cy="435" rx="8.5" ry="4.6" transform="rotate(-8 41 435)" fill="#1a1a24"/>
<ellipse cx="42" cy="433.8" rx="5" ry="2.2" transform="rotate(-8 42 433.8)" fill="#3a3a50"/>
<!-- apple mouse -->
<ellipse cx="41" cy="460.5" rx="9" ry="6" transform="rotate(-35 41 460.5)" fill="#f4f4f4" stroke="#c4c4c4" stroke-width=".7"/>
<g font-size="8.5" fill="#101010" stroke="#101010" stroke-width=".14" transform="translate(59.6 0) scale(.92 1) translate(-59.6 0)">
<text x="59.6" y="307.8">Keyboard 1</text>
<text x="59.6" y="333.8">Keyboard 2</text>
<text x="59.6" y="359.8">Keyboard 3</text>
<text x="59.6" y="385.8">Apple keyboard</text>
<text x="59.6" y="411.8">Optical mouse 1</text>
<text x="59.6" y="437.8" fill="#1f3fc8" stroke="#1f3fc8">Optical mouse 2</text>
<text x="59.6" y="463.8">Apple Mouse</text>
</g>
</svg>
<svg class="abs" style="left:0;top:0" width="800" height="495" viewBox="0 0 800 495" font-family="Liberation Sans">
<defs>
<linearGradient id="scr" x1="0" y1="0" x2="0" y2="1"><stop offset="0" stop-color="#62b0ea"/><stop offset="1" stop-color="#1656bf"/></linearGradient>
<linearGradient id="silv" x1="0" y1="0" x2="1" y2="1"><stop offset="0" stop-color="#e6e6e6"/><stop offset="1" stop-color="#9e9e9e"/></linearGradient>
<linearGradient id="silv2" x1="0" y1="0" x2="1" y2="0"><stop offset="0" stop-color="#b4b4b4"/><stop offset=".5" stop-color="#e2e2e2"/><stop offset="1" stop-color="#a0a0a0"/></linearGradient>
<linearGradient id="blk" x1="0" y1="0" x2="0" y2="1"><stop offset="0" stop-color="#555"/><stop offset=".15" stop-color="#2e2e2e"/><stop offset="1" stop-color="#1e1e1e"/></linearGradient>
<linearGradient id="srvside" x1="0" y1="0" x2="1" y2="1"><stop offset="0" stop-color="#050505"/><stop offset=".6" stop-color="#2a2a2a"/><stop offset="1" stop-color="#6a6a6a"/></linearGradient>
<linearGradient id="prn" x1="0" y1="0" x2="1" y2="0"><stop offset="0" stop-color="#9a9a9a"/><stop offset=".3" stop-color="#d4d4d4"/><stop offset="1" stop-color="#b0b0b0"/></linearGradient>
<linearGradient id="prnl" x1="0" y1="0" x2="1" y2="0"><stop offset="0" stop-color="#8a8a8a"/><stop offset="1" stop-color="#b4b4b4"/></linearGradient>
<linearGradient id="prnt" x1="0" y1="0" x2="1" y2="0"><stop offset="0" stop-color="#e8e8e8"/><stop offset="1" stop-color="#c4c4c4"/></linearGradient>
<linearGradient id="prnd" x1="0" y1="0" x2="0" y2="1"><stop offset="0" stop-color="#c8c8c8"/><stop offset=".3" stop-color="#dedede"/><stop offset="1" stop-color="#d0d0d0"/></linearGradient>
<linearGradient id="prnb" x1="0" y1="0" x2="0" y2="1"><stop offset="0" stop-color="#d8d8d8"/><stop offset="1" stop-color="#a4a4a4"/></linearGradient>
<pattern id="mesh" width="2" height="2" patternUnits="userSpaceOnUse"><rect width="2" height="2" fill="#7c7c7c"/><rect width="1" height="1" fill="#454545"/><rect x="1" y="1" width="1" height="1" fill="#454545"/></pattern>
<g id="pc">
  <path d="M53 7L62 5.5L62 51.5L38 47Z" fill="#c4c4c4" stroke="#8a8a8a" stroke-width=".5"/>
  <path d="M62 5.5L79 7.5L78.5 50L62 51.5Z" fill="#cfcfcf" stroke="#7a7a7a" stroke-width=".6"/>
  <path d="M63.6 7.5L77.2 9L77 48.6L63.6 49.8Z" fill="#2b2b2b"/>
  <path d="M64 11.5l13 1.2M64 14.5l13 1.2M64 17.5l13 1.2M64 20.5l13 1.2" stroke="#6a6a6a" stroke-width=".9"/>
  <path d="M65 27.8l11 1v1.8l-11-1z" fill="#8a8a8a"/>
  <ellipse cx="70.2" cy="36.8" rx="1.6" ry="2.2" fill="#9a9a9a"/>
  <path d="M69.6 38.5h1.2v4.5h-1.2z" fill="#9a9a9a"/>
  <path d="M67 45.2h7v2h-7z" fill="#7a7a7a"/>
  <path d="M24.1 46.5h9v5h-9z" fill="#a9a9a9"/>
  <ellipse cx="30.6" cy="53.5" rx="14" ry="3.6" fill="#b4b4b4" stroke="#6a6a6a" stroke-width=".6"/>
  <ellipse cx="30.6" cy="53" rx="10" ry="2" fill="#d4d4d4"/>
  <path d="M0 0L53 2.75L53 44.7L2.1 48.8Z" fill="url(#silv)" stroke="#7d7d7d" stroke-width=".7"/>
  <path d="M3.5 2.1L51.6 4.8L51.6 39.9L5.5 43.3Z" fill="url(#scr)" stroke="#5a6a80" stroke-width=".4"/>
  <path d="M6.2 60.5L66.1 53.7L83.9 61.9L11 73.6Z" fill="#d6d6d6" stroke="#8a8a8a" stroke-width=".6"/>
  <path d="M9.5 61.5L65 55.5L79 61.8L13 71Z" fill="#353535"/>
  <path d="M11.5 64L70 57.5M12.5 66.5L73 59.5M13.5 69L76 61.5" stroke="#7a7a7a" stroke-width=".55" stroke-dasharray="1.2 .8"/>
  <path d="M11 73.2L83.5 61.6" stroke="#eeeeee" stroke-width=".8"/>
  <ellipse cx="88.3" cy="57.8" rx="6.6" ry="3.3" transform="rotate(15 88.3 57.8)" fill="#e4e4e4" stroke="#8a8a8a" stroke-width=".6"/>
  <path d="M82.2 56.5q1.5 2.6 5 3.4l-1.2 1.2q-3.6-1-3.8-4.6z" fill="#4a4a4a"/>
</g>
<g id="ws">
  <path d="M18.4 41h8.8v4.6h-8.8z" fill="#3a3a3a"/>
  <path d="M-8.1 47q0-3 3-3h54.5q3 0 3 3v20.9h-60.5z" fill="url(#blk)" stroke="#111" stroke-width=".5"/>
  <path d="M-6.5 44.8h57.3l1.5 2.5h-60.3z" fill="#5e5e5e"/>
  <path d="M-6 57q1-7 12-7.3h8.5v14.6H6q-11-.3-12-7.3z" fill="#3c3c3c" stroke="#777" stroke-width=".6"/>
  <path d="M-4 57q1.5-5 9-5.3h6v10.6H5q-7.5-.3-9-5.3z" fill="#666"/>
  <circle cx="7.4" cy="57.2" r="2.6" fill="#e4e4e4" stroke="#555" stroke-width=".5"/>
  <rect x="14.5" y="49.5" width="14.5" height="15" fill="#5a5a5a"/>
  <path d="M15 51h13.5M15 53.8h13.5M15 56.6h13.5M15 59.4h13.5M15 62.2h13.5" stroke="#0a0a0a" stroke-width="1.7"/>
  <circle cx="21.6" cy="56.7" r="1.7" fill="#8a8a8a" stroke="#333" stroke-width=".3"/>
  <rect x="30" y="49.5" width="21" height="15" fill="#2e2e2e"/>
  <path d="M30 52.2h21M30 57.6h21M30 63h21" stroke="#6a6a6a" stroke-width=".7"/>
  <rect x="0" y="0" width="45.6" height="41.4" fill="#dcdcdc" stroke="#6e6e6e" stroke-width=".7"/>
  <rect x="0.4" y="0.4" width="44.8" height="1.4" fill="#b8b8b8"/>
  <rect x="1.6" y=".3" width="3.4" height="1.3" fill="#e0502a"/>
  <rect x="2.4" y="2" width="41.1" height="32.6" fill="url(#scr)" stroke="#7b8a9a" stroke-width=".4"/>
  <path d="M3 37.5h9M34 37.5h8.5M3 39.2h9M34 39.2h8.5" stroke="#b4b4b4" stroke-width=".6"/>
  <path d="M22 38.4h8" stroke="#8a8a8a" stroke-width=".8"/>
  <circle cx="31.3" cy="38" r="1" fill="#3a7ad8"/>
  <rect x="-15.6" y="68.6" width="76.8" height="7.5" rx="1" fill="#d6d6d6" stroke="#8a8a8a" stroke-width=".5"/>
  <rect x="-14.2" y="69.7" width="50" height="5.3" fill="#474747"/>
  <rect x="37.2" y="69.7" width="9.6" height="5.3" fill="#474747"/>
  <rect x="48.2" y="69.7" width="11.8" height="5.3" fill="#474747"/>
  <path d="M-14.2 71.4h50M-14.2 73.2h50M37.2 72.3h22.8" stroke="#9a9a9a" stroke-width=".45"/>
  <path d="M-12 69.7v5.3M-9 69.7v5.3M-6 69.7v5.3M-3 69.7v5.3M0 69.7v5.3M3 69.7v5.3M6 69.7v5.3M9 69.7v5.3M12 69.7v5.3M15 69.7v5.3M18 69.7v5.3M21 69.7v5.3M24 69.7v5.3M27 69.7v5.3M30 69.7v5.3M33 69.7v5.3M40 69.7v5.3M43.5 69.7v5.3M51 69.7v5.3M54 69.7v5.3M57 69.7v5.3" stroke="#8a8a8a" stroke-width=".4"/>
  <ellipse cx="71.4" cy="70.6" rx="6.6" ry="3.6" transform="rotate(28 71.4 70.6)" fill="#3e7a90" stroke="#2a3a40" stroke-width=".5"/>
  <ellipse cx="69.5" cy="69" rx="3.4" ry="2" transform="rotate(28 69.5 69)" fill="#d6dde0"/>
</g>
</defs>
<!-- canvas bg & top rule -->
<rect x="185" y="94" width="583" height="374" fill="#fff"/>
<rect x="20" y="89.2" width="759.5" height=".9" fill="#fbfbfb"/>
<rect x="20" y="90.1" width="759.5" height="1.3" fill="#8e8e8e"/>
<rect x="185" y="91.4" width="583" height="1.4" fill="#bde2de"/>
<rect x="185" y="92.8" width="583" height="1.4" fill="#3c4846"/>
<g id="diag">
<!-- connectors -->
<g fill="none" style="stroke:var(--sc,#4c1ca0);stroke-width:var(--sw,1.2px)">
<path d="M282.5 141.9H327.5V259.5"/>
<path d="M242.3 382V259.5H397M456 259.5H546"/>
<path d="M365.6 259.5V382"/>
<path d="M426.3 151.4V221"/>
<circle cx="645.3" cy="271.9" r="75"/>
</g>
<!-- desktop PCs -->
<use href="#pc" transform="translate(204.1 105.5)"/>
<use href="#pc" transform="translate(195.5 379.4)"/>
<use href="#pc" transform="translate(318 379.4)"/>
<!-- workstations -->
<use href="#ws" transform="translate(616.3 142.1)"/>
<use href="#ws" transform="translate(546 221)"/>
<use href="#ws" transform="translate(687.3 221)"/>
<use href="#ws" transform="translate(619.4 300.3)"/>
<!-- printer -->
<path d="M403 151.7V107.5q0-2.5 2.5-2.5h41.8q2.5 0 2.5 2.5V151.7z" fill="#9c9c9c" stroke="#5e5e5e" stroke-width=".6"/>
<path d="M403.5 106h8.1v45.4h-8.1z" fill="url(#prnl)"/>
<path d="M411.6 105.6h36v21.8h-36z" fill="url(#prnt)"/>
<path d="M447.5 105.6h1.9v46h-1.9z" fill="#8a8a8a"/>
<rect x="422.4" y="109" width="14.6" height="4.6" rx="2" fill="#f4f4f4" stroke="#5a5a5a" stroke-width=".8"/>
<circle cx="429.4" cy="120.7" r="1.3" fill="#e0208a"/>
<g fill="#e040b0"><rect x="405.5" y="110" width="1.6" height="1"/><rect x="408.2" y="110.8" width="1.6" height="1"/><rect x="405" y="113" width="1.2" height="1"/><rect x="408.5" y="113.5" width="1.6" height="1"/><rect x="407.5" y="116" width="1.6" height="1"/></g>
<path d="M413.9 127.3q16-1.5 31.8 0v16.3h-31.8z" fill="url(#prnd)" stroke="#8a8a8a" stroke-width=".5"/>
<path d="M425 128.6q5 .8 12 0" stroke="#7a7a7a" stroke-width=".8" fill="none"/>
<path d="M403.4 143.6h46v8h-46z" fill="url(#prnb)" stroke="#707070" stroke-width=".4"/>
<path d="M415.3 146.8v2.8" stroke="#111" stroke-width="1"/>
<path d="M421 151.2h19" stroke="#555" stroke-width=".9"/>
<!-- server -->
<path d="M397.1 230.3L417.9 220.8V299.4L397.8 287z" fill="url(#srvside)"/>
<path d="M405 232v50" stroke="#3a3a3a" stroke-width=".6"/>
<rect x="413" y="250.7" width="2.3" height="17.3" rx="1" fill="#3e3e3e"/>
<rect x="417.9" y="220.8" width="38.1" height="78.6" rx="1" fill="url(#silv2)" stroke="#777" stroke-width=".5"/>
<rect x="420.4" y="224.5" width="33.9" height="72" fill="url(#mesh)"/>
<path d="M420.4 249.2h33.9" stroke="#d0d0d0" stroke-width="1.4"/>
<path d="M438.3 224.5v72" stroke="#999" stroke-width=".8"/>
<circle cx="438.3" cy="259.8" r="3" fill="#d8d8d8" stroke="#f4f4f4" stroke-width=".8"/><circle cx="438.3" cy="259.8" r="1.5" fill="#555"/>
<circle cx="437.2" cy="222.6" r=".9" fill="#fff"/>
<rect x="421.8" y="290.7" width="4.4" height="4.3" fill="#4a8ce0"/>
<rect x="448" y="291.4" width="5" height="3.6" fill="#e8e8e8"/>
<!-- labels -->
<g font-size="8.6" fill="#1040ee" stroke="#1040ee" stroke-width=".08" text-anchor="middle">
<text x="251.1" y="189.6" textLength="37.6" lengthAdjust="spacingAndGlyphs">Desktop PC</text>
<text x="242.4" y="463.2" textLength="37.6" lengthAdjust="spacingAndGlyphs">Desktop PC</text>
<text x="365" y="463.2" textLength="37.6" lengthAdjust="spacingAndGlyphs">Desktop PC</text>
<text x="449.2" y="163.1" textLength="21.5" lengthAdjust="spacingAndGlyphs">Printer</text>
<text x="426.6" y="309.1" textLength="20.6" lengthAdjust="spacingAndGlyphs">Server</text>
<text x="647.4" y="228.9" textLength="38.4" lengthAdjust="spacingAndGlyphs">Workstation</text>
<text x="556" y="310.6" textLength="38.4" lengthAdjust="spacingAndGlyphs">Workstation</text>
<text x="741" y="312.2" textLength="38.4" lengthAdjust="spacingAndGlyphs">Workstation</text>
<text x="650.5" y="387.9" textLength="38.4" lengthAdjust="spacingAndGlyphs">Workstation</text>
</g>
<text x="645.5" y="276.4" font-size="10.8" fill="#3a1c9a" stroke="#3a1c9a" stroke-width=".25" text-anchor="middle">Ring</text>
</g>
<!-- vertical scrollbar -->
<rect x="768" y="92.4" width="11.5" height="375.6" fill="#f6f6f6"/>
<rect x="768" y="92.4" width=".6" height="375.6" fill="#e6e6e6"/>
<rect x="770.4" y="94" width="5.4" height="293.6" rx="2.7" fill="#c2c2c2"/>
<!-- bottom bar -->
<rect x="185" y="468" width="595" height="11.5" fill="#f7f7f7"/>
<rect x="185" y="467.6" width="583" height=".6" fill="#dcdcdc"/>
<rect x="185" y="468" width="12" height="11" fill="#ececec" stroke="#c6c6c6" stroke-width=".5"/>
<path d="M189.5 471.2v5.5M192.5 471.2v5.5" stroke="#8a8a8a" stroke-width=".9"/>
<rect x="197" y="468" width="1" height="11" fill="#4a4a4a"/>
<rect x="198" y="468" width="32" height="11" fill="#f0f0f0"/>
<path d="M214 468v11" stroke="#dadada" stroke-width=".6"/>
<path d="M207.5 470.8v5l-3.5-2.5z" fill="#c0c0c0"/>
<path d="M219.8 470.8v5l3.8-2.5z" fill="#333"/>
<rect x="230.5" y="468.3" width="69" height="10.6" fill="#f5f5f5" stroke="#cfcfcf" stroke-width=".5"/>
<text x="233.5" y="476.8" font-size="8" fill="#222">75%</text>
<path d="M291.6 472.3l1.6-1.6 1.6 1.6M291.6 475.3l1.6 1.6 1.6-1.6" fill="none" stroke="#333" stroke-width=".8"/>
<rect x="299.6" y="468.3" width="31.6" height="10.6" fill="#7fc4f4"/>
<rect x="303.5" y="470" width="6.5" height="7.4" rx=".8" fill="#f4f8fc" stroke="#4a6a98" stroke-width=".6"/>
<rect x="311.3" y="470" width="6.5" height="7.4" rx=".8" fill="#f4f8fc" stroke="#4a6a98" stroke-width=".6"/>
<rect x="319.1" y="470" width="6.5" height="7.4" rx=".8" fill="#f4f8fc" stroke="#4a6a98" stroke-width=".6"/>
<rect x="374.4" y="471.4" width="364" height="5.4" rx="2.7" fill="#c0c0c0"/>
<rect x="759" y="468.7" width="9.5" height="9.1" fill="#cfe2f6" stroke="#4a6aa8" stroke-width=".5"/>
<circle cx="763.7" cy="473.2" r="2.6" fill="none" stroke="#1f55c0" stroke-width="1"/>
<path d="M763.7 469v1.6M763.7 475.8v1.6M759.5 473.2h1.6M766.3 473.2h1.6" stroke="#1f55c0" stroke-width=".9"/>
<rect x="769" y="468.7" width="9.5" height="9.1" fill="#dde8f4" stroke="#4a6aa8" stroke-width=".5"/>
<rect x="771.6" y="470.3" width="4.2" height="5.9" rx="1" fill="none" stroke="#1f55c0" stroke-width=".8"/>
</svg>
<svg class="abs" style="left:0;top:0" width="800" height="618" viewBox="0 0 800 618" font-family="Liberation Sans">
<defs>
<linearGradient id="thbg" x1="0" y1="0" x2="0" y2="1"><stop offset="0" stop-color="#d4d4d4"/><stop offset=".35" stop-color="#fdfdfd"/><stop offset="1" stop-color="#ffffff"/></linearGradient>
<linearGradient id="refl" x1="0" y1="0" x2="0" y2="1"><stop offset="0" stop-color="#fff" stop-opacity=".7"/><stop offset=".5" stop-color="#fff" stop-opacity=".4"/><stop offset="1" stop-color="#fff" stop-opacity=".15"/></linearGradient>
<linearGradient id="reflmask" x1="0" y1="0" x2="0" y2="1"><stop offset="0" stop-color="#fff" stop-opacity=".55"/><stop offset="1" stop-color="#fff" stop-opacity="0"/></linearGradient>
<mask id="rm" maskUnits="userSpaceOnUse" x="0" y="573" width="800" height="24"><rect x="0" y="573.5" width="800" height="23" fill="url(#reflmask)"/></mask>
<clipPath id="c1"><rect x="45.7" y="513.7" width="92.8" height="59.6"/></clipPath>
<clipPath id="c2"><rect x="156.5" y="513.7" width="92" height="59.6"/></clipPath>
<clipPath id="c3"><rect x="266.5" y="513.7" width="92" height="59.6"/></clipPath>
<clipPath id="c4"><rect x="376.5" y="513.7" width="92" height="59.6"/></clipPath>
<g id="mpc"><rect x="0" y="0" width="7" height="5.8" fill="#2a86e0" stroke="#9a9a9a" stroke-width=".5"/><rect x="3" y="5.8" width="1.2" height="1" fill="#888"/><rect x="7.3" y=".8" width="2.8" height="6.4" fill="#3a3a3a" stroke="#999" stroke-width=".3"/><path d="M.5 7.6l7.5-.3 2 1.2-8 .4z" fill="#444"/></g>
<g id="mws"><rect x="1.5" y="0" width="6" height="5.5" fill="#1f6fd8" stroke="#777" stroke-width=".4"/><rect x="0" y="6" width="9" height="3.4" fill="#222"/><rect x="-1" y="9.5" width="11" height="1.2" fill="#555"/></g>
<g id="th2">
  <path d="M167 521.2H224.4M167 521.2v5.6M182.3 521.2v6.4M195 521.2v6.4M202.5 521.2v6.4M209.5 521.2v6.4M224.4 521.2V552.7M188.8 552.7H250M188.8 552.7v6.5M203.5 552.7v6.5M218 552.7v6.5M232.5 552.7v6.5M247 552.7v6.5" fill="none" stroke="#a0b4cc" stroke-width=".5"/>
  <path d="M214 519.5l15-1.5 2.5 4-15 1.6z" fill="#2a4c8a"/>
  <use href="#mws" transform="translate(163 527)"/>
  <rect x="179" y="527.6" width="6.4" height="10.4" fill="#4a4a4a" stroke="#888" stroke-width=".3"/>
  <rect x="191.7" y="527.6" width="7" height="10.4" fill="#4a4a4a" stroke="#999" stroke-width=".3"/><rect x="199.2" y="527.6" width="7" height="10.4" fill="#505050" stroke="#999" stroke-width=".3"/><rect x="206.7" y="527.6" width="7" height="10.4" fill="#4a4a4a" stroke="#999" stroke-width=".3"/>
  <use href="#mpc" transform="translate(182.4 559.5)"/><use href="#mpc" transform="translate(197 559.5)"/><use href="#mpc" transform="translate(211.8 559.5)"/><use href="#mpc" transform="translate(226.5 559.5)"/><use href="#mpc" transform="translate(241.2 559.5)"/>
</g>
<g id="th3">
  <path d="M273.5 525.7H298.5M273.5 525.7v-3M285.5 525.7v-6M298.5 525.7v-4M285.5 525.7v5M283 535l10 4M300 535l-7 4M298.5 536.5l20-10" fill="none" stroke="#8a8ad8" stroke-width=".5"/>
  <path d="M318 534l15-11" stroke="#e04040" stroke-width=".7"/>
  <path d="M292 545l-6 8M311 545l6 5" stroke="#f0d020" stroke-width=".7"/>
  <path d="M277.5 558v10M289 558v10M275 557.5H290M315.5 555.5v5M330 555.5v5M315.5 555.5H330" fill="none" stroke="#8a8ad8" stroke-width=".5"/>
  <use href="#mws" transform="translate(269 517)"/><use href="#mws" transform="translate(281.5 517)"/>
  <rect x="295.5" y="518.5" width="4.5" height="8" fill="#333"/>
  <path d="M330 523l5-3.5 5 2v6l-5 2z" fill="#e0804a"/>
  <path d="M342 520q3-5 9-3 4-1 6 3-1 4-6 4-7 0-9-4z" fill="#c8c8c8"/>
  <path d="M281 536l10 .5v2l-10-.5z M309 535l10 .5v2l-10-.5z M295.5 543l10 .5v2l-10-.5z M277 552.5l10 .5v2l-10-.5z M278 558.5l10 .5v2l-10-.5z M317.5 551l10 .5v2l-10-.5z" fill="#223a80"/>
  <use href="#mws" transform="translate(273 565)"/><use href="#mws" transform="translate(286.5 565)"/>
  <use href="#mws" transform="translate(311.5 561)"/><use href="#mws" transform="translate(326 561)"/>
</g>
<g id="th4">
  <path d="M385 520q4-5 10-3 6-1 8 3-2 4-8 4-8 0-10-4z" fill="#c4c4c4"/>
  <path d="M405 521l7-2 3 2-7 2.5z" fill="#222"/>
  <path d="M427 522q2-9 6-9 4 0 6 9z" fill="#f0a020"/><path d="M427 520q2-5 6-5 4 0 6 5z" fill="#e84020"/>
  <path d="M403 521h24M428 523l-22 11M432 523l-4 12M436 523l8 11M444 538l25-9M444 538l22 6M444 538l8 12" fill="none" stroke="#8a8a8a" stroke-width=".35"/>
  <rect x="382" y="533" width="5.5" height="9.5" fill="#333"/>
  <path d="M398 536l10-.5 1.5 2.5-10 .5z" fill="#2a4c8a"/>
  <path d="M405 538v15.5M388 553.5H418M388 553.5v3M403 553.5v3M418 553.5v3" fill="none" stroke="#a0a0a0" stroke-width=".35"/>
  <use href="#mws" transform="translate(419 537)"/>
  <path d="M438 538l8-1 2 2-8 1z" fill="#9a9a9a"/>
  <rect x="460" y="529" width="4" height="6" rx=".8" fill="#222"/><rect x="461" y="530" width="2" height="4" fill="#3a8ae0"/>
  <path d="M459 547l5-3h4l-1 5h-8z" fill="#555"/>
  <rect x="450" y="554" width="3" height="5" rx=".6" fill="#222"/>
  <use href="#mpc" transform="translate(382 559)"/><use href="#mpc" transform="translate(397 559)"/><use href="#mpc" transform="translate(412 559)"/>
</g>
</defs>
<!-- thumbnail backgrounds -->
<rect x="45.7" y="513.7" width="92.8" height="59.6" fill="url(#thbg)"/>
<rect x="156.5" y="513.7" width="92" height="59.6" fill="url(#thbg)"/>
<rect x="266.5" y="513.7" width="92" height="59.6" fill="url(#thbg)"/>
<rect x="376.5" y="513.7" width="92" height="59.6" fill="url(#thbg)"/>
<g clip-path="url(#c1)"><use href="#diag" style="--sw:4.5px;--sc:#9670d0" transform="translate(18.5 500.5) scale(.153)"/></g>
<g clip-path="url(#c2)"><use href="#th2"/></g>
<g clip-path="url(#c3)"><use href="#th3"/></g>
<g clip-path="url(#c4)"><use href="#th4"/></g>
<rect x="45.7" y="513.7" width="92.8" height="59.6" fill="none" stroke="#3c3c3c" stroke-width="1"/>
<!-- reflections -->
<rect x="45.7" y="573.5" width="92.8" height="23" fill="url(#refl)"/>
<rect x="156.5" y="573.5" width="92" height="23" fill="url(#refl)"/>
<rect x="266.5" y="573.5" width="92" height="23" fill="url(#refl)"/>
<rect x="376.5" y="573.5" width="92" height="23" fill="url(#refl)"/>
<g mask="url(#rm)">
<g transform="translate(0 1147) scale(1 -1)">
<g clip-path="url(#c1)"><use href="#diag" style="--sw:4.5px;--sc:#9670d0" transform="translate(18.5 500.5) scale(.153)"/></g>
<g clip-path="url(#c2)"><use href="#th2"/></g>
<g clip-path="url(#c3)"><use href="#th3"/></g>
<g clip-path="url(#c4)"><use href="#th4"/></g>
</g>
</g>
</svg>
<svg class="abs" style="left:0;top:0" width="800" height="495" viewBox="0 0 800 495" font-family="Liberation Sans">
<path d="M20 479.7H780V487.5Q780 491.5 776 491.5H24Q20 491.5 20 487.5Z" fill="#ececec"/>
<path d="M20 479.7H185" stroke="#d4d4d4" stroke-width=".6"/>
<text x="26.7" y="487.3" font-size="8.1" fill="#1a1a1a" stroke="#1a1a1a" stroke-width=".15">Ready</text>
</svg>
</body></html>
